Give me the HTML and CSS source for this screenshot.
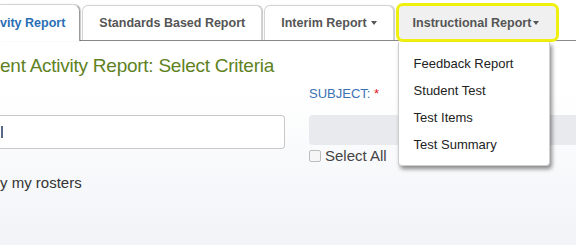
FILE: index.html
```html
<!DOCTYPE html>
<html lang="en">
<head>
  <meta charset="UTF-8">
  <title>Student Activity Report</title>
  <link rel="stylesheet" href="styles.css">
</head>
<body>
  <div class="page">
    <div class="tabs">
      <div class="tab active">vity Report</div>
      <div class="tab">Standards Based Report</div>
      <div class="tab">Interim Report <span class="caret spaced"></span></div>
      <div class="tab-wrap">
        <div class="tab focused">Instructional Report<span class="caret"></span></div>
        <ul class="dropdown">
          <li>Feedback Report</li>
          <li>Student Test</li>
          <li>Test Items</li>
          <li>Test Summary</li>
        </ul>
      </div>
    </div>

    <h1 class="title">ent Activity Report: Select Criteria</h1>

    <div class="criteria">
      <div class="col">
        <div class="label">&nbsp;</div>
        <div class="input"><span class="cursor"></span></div>
        <div class="roster">y my rosters</div>
      </div>
      <div class="col">
        <div class="label subject">SUBJECT: <span class="req">*</span></div>
        <div class="select"></div>
        <div class="check-row">
          <span class="checkbox"></span>
          <span>Select All</span>
        </div>
      </div>
    </div>
  </div>
</body>
</html>
```

FILE: styles.css
```css
body {
  margin: 0;
  font-family: "Liberation Sans", Arial, sans-serif;
  color: #333;
  background: linear-gradient(to bottom, #ffffff 0, #ffffff 90px, #f1f3f7 245px);
  min-height: 100vh;
  overflow: hidden;
}

.page {
  width: 576px;
}

/* tab bar */
.tabs {
  display: flex;
  align-items: flex-end;
  height: 36px;
  padding-top: 4px;
  border-bottom: 1px solid #8a8a8a;
}

.tab {
  height: 35px;
  display: flex;
  align-items: center;
  padding: 0 16px;
  margin-right: 2px;
  font-size: 12.5px;
  font-weight: bold;
  color: #555;
  background: #fff;
  border: 1px solid #d4d4d4;
  border-bottom: none;
  border-radius: 6px 6px 0 0;
  box-shadow: 1px 0 1px rgba(0, 0, 0, 0.22);
  box-sizing: border-box;
  white-space: nowrap;
}

.tab.active {
  color: #2a6fb5;
  padding-left: 0;
  padding-right: 14px;
  border-left: none;
  border-radius: 0 7px 0 0;
  border-right-color: #9a9a9a;
  height: 37px;
  margin-bottom: -1px;
}

.caret {
  display: inline-block;
  width: 0;
  height: 0;
  margin-left: 2px;
  border-top: 4px solid #555;
  border-left: 3px solid transparent;
  border-right: 3px solid transparent;
}

.caret.spaced {
  margin-left: 4px;
}

.tab-wrap {
  position: relative;
  align-self: flex-start;
  margin-top: -1px;
}

.tab.focused {
  height: 39px;
  padding: 0 17px 0 14px;
  background: #f0f0f0;
  border: 3px solid #f0f00e;
  border-radius: 7px;
  box-shadow: none;
  margin-right: 0;
}

.dropdown {
  position: absolute;
  top: 39px;
  left: 2px;
  width: 152px;
  margin: 0;
  padding: 8px 0 7px;
  list-style: none;
  background: #fff;
  border: 1px solid #cfcfcf;
  border-top: none;
  border-radius: 0 0 4px 4px;
  box-shadow: 2px 3px 4px rgba(0, 0, 0, 0.45);
  box-sizing: border-box;
  z-index: 2;
}

.dropdown li {
  height: 27px;
  line-height: 27px;
  padding-left: 15px;
  font-size: 13px;
  color: #222;
}

/* heading */
.title {
  margin: 14px 0 0;
  font-size: 19px;
  line-height: 21px;
  font-weight: normal;
  color: #5f821f;
  letter-spacing: -0.25px;
}

/* criteria form */
.criteria {
  display: grid;
  grid-template-columns: 285px 1fr;
  column-gap: 24px;
  margin-top: 10px;
}

.label {
  font-size: 13px;
  line-height: 16px;
  margin-bottom: 13px;
}

.subject {
  color: #3a72b4;
}

.req {
  color: #e0161b;
}

.input {
  height: 34px;
  background: #fff;
  border: 1px solid #c8c8c8;
  border-left: none;
  border-radius: 0 4px 4px 0;
  box-sizing: border-box;
  display: flex;
  align-items: center;
}

.cursor {
  display: block;
  width: 2px;
  height: 12px;
  margin-left: 1px;
  background: #5a6a86;
}

.roster {
  margin-top: 25px;
  font-size: 15px;
  line-height: 18px;
  color: #333;
}

.select {
  height: 30px;
  margin-top: 1px;
  background: #e8eaee;
  border-radius: 4px 0 0 4px;
}

.check-row {
  display: flex;
  align-items: center;
  gap: 4px;
  margin-top: 2px;
  font-size: 15px;
  line-height: 18px;
  color: #444;
}

.checkbox {
  width: 10px;
  height: 10px;
  border: 1px solid #bdbdbd;
  border-radius: 2px;
  background: #f6f6f6;
}
```
